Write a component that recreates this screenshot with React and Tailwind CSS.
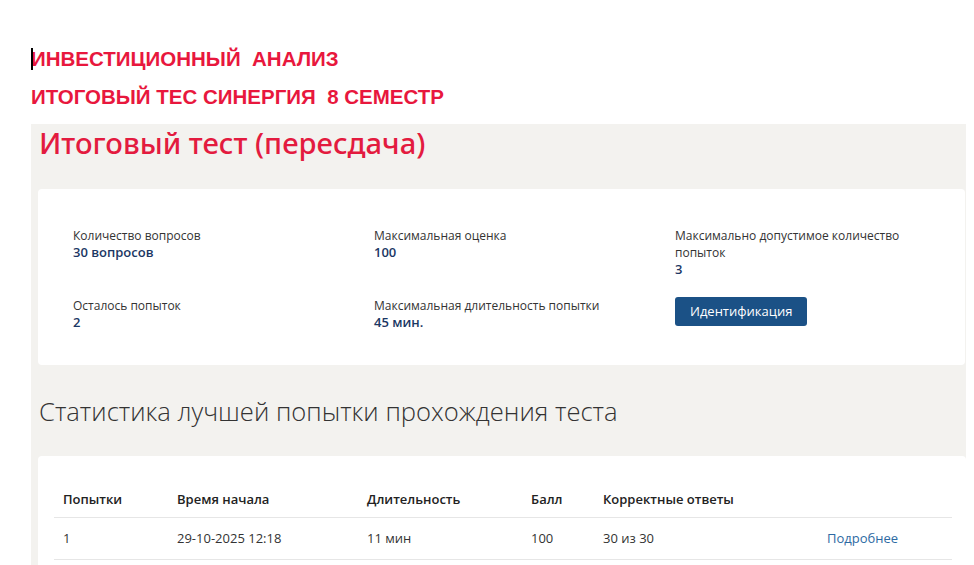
// App.jsx

const stats = [
    { label: 'Количество вопросов', value: '30 вопросов' },
    { label: 'Максимальная оценка', value: '100' },
    { label: 'Максимально допустимое количество попыток', value: '3', narrow: true },
    { label: 'Осталось попыток', value: '2' },
    { label: 'Максимальная длительность попытки', value: '45 мин.' },
];

const cols = 'grid grid-cols-[114px_190px_164px_72px_224px_1fr]';

function StatItem({ label, value, narrow }) {
    return (
        <div className={narrow ? 'max-w-[230px]' : ''}>
            <div className="text-[12px] leading-[17px] text-[#333]">{label}</div>
            <div className="text-[13px] leading-[16px] font-semibold text-[#1b3764]">{value}</div>
        </div>
    );
}

function App() {
    return (
        <div className="w-[974px] h-[565px] overflow-hidden bg-white" style={{ fontFamily: '"Open Sans", "Noto Sans", sans-serif' }}>
            <div className="pl-[31px] pt-[47px] text-[#e8173d] font-bold text-[20.5px] leading-[24px]" style={{ fontFamily: '"Liberation Sans", Arial, sans-serif' }}>
                <div className="relative">
                    <span className="absolute left-0 top-[1px] w-[2px] h-[22px] bg-black" />
                    ИНВЕСТИЦИОННЫЙ&nbsp; АНАЛИЗ
                </div>
                <div className="mt-[14px]">ИТОГОВЫЙ ТЕС СИНЕРГИЯ&nbsp; 8 СЕМЕСТР</div>
            </div>

            <div className="ml-[31px] mt-[15px] w-[935px] bg-[#f3f2ef] pt-[1px] pb-[40px]">
                <h1 className="pl-[8px] text-[29.2px] leading-[36px] font-medium text-[#e31b3f]" style={{ fontFamily: '"Noto Sans", "Open Sans", sans-serif' }}>
                    Итоговый тест (пересдача)
                </h1>

                <div className="ml-[7px] mt-[28px] w-[927px] bg-white rounded-[4px] pl-[35px] pt-[38px] pb-[35px]">
                    <div className="grid grid-cols-[301px_301px_301px] gap-y-[20px]">
                        {stats.map((s) => (
                            <StatItem key={s.label} label={s.label} value={s.value} narrow={s.narrow} />
                        ))}
                        <div>
                            <button className="h-[29px] px-[15px] rounded-[3px] bg-[#1b5186] text-white text-[13px] font-medium">
                                Идентификация
                            </button>
                        </div>
                    </div>
                </div>

                <h2 className="pl-[8px] mt-[31px] text-[25.6px] leading-[32px] font-light text-[#333]">
                    Статистика лучшей попытки прохождения теста
                </h2>

                <div className="ml-[7px] mt-[28px] w-[928px] h-[200px] bg-white rounded-[4px] pl-[16px] pr-[14px] pt-[26px]">
                    <div className={`${cols} h-[36px] items-center border-b border-[#e6e6e6] text-[13px] font-semibold text-[#222]`}>
                        <div className="pl-[9px]">Попытки</div>
                        <div className="pl-[9px]">Время начала</div>
                        <div className="pl-[9px]">Длительность</div>
                        <div className="pl-[9px]">Балл</div>
                        <div className="pl-[9px]">Корректные ответы</div>
                        <div />
                    </div>
                    <div className={`${cols} h-[42px] items-center border-b border-[#e6e6e6] text-[13px] text-[#333]`}>
                        <div className="pl-[9px]">1</div>
                        <div className="pl-[9px]">29-10-2025 12:18</div>
                        <div className="pl-[9px]">11 мин</div>
                        <div className="pl-[9px]">100</div>
                        <div className="pl-[9px]">30 из 30</div>
                        <div className="pl-[9px] text-[#2d6aa3]">Подробнее</div>
                    </div>
                </div>
            </div>
        </div>
    );
}

export default App;
